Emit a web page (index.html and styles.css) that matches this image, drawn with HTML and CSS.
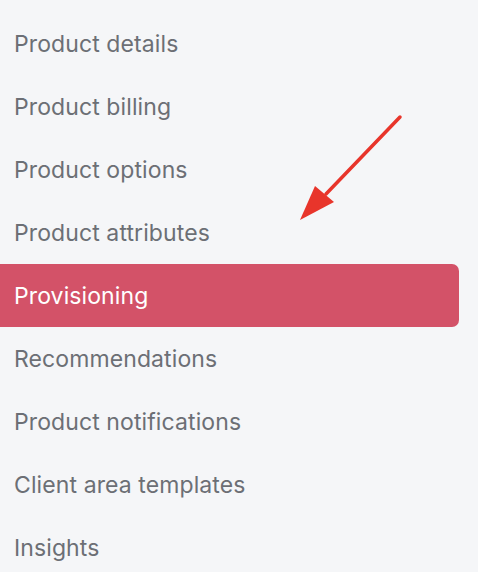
FILE: index.html
```html
<!DOCTYPE html>
<html>
<head>
    <title>Product settings</title>
    <link rel="stylesheet" href="styles.css">
</head>
<body>
    <nav class="side-menu">
        <a class="menu-item" href="#">Product details</a>
        <a class="menu-item" href="#">Product billing</a>
        <a class="menu-item" href="#">Product options</a>
        <a class="menu-item" href="#">Product attributes</a>
        <a class="menu-item active" href="#">Provisioning</a>
        <a class="menu-item" href="#">Recommendations</a>
        <a class="menu-item" href="#">Product notifications</a>
        <a class="menu-item" href="#">Client area templates</a>
        <a class="menu-item" href="#">Insights</a>
    </nav>

    <!-- annotation arrow -->
    <svg class="arrow" width="120" height="120" viewBox="0 0 120 120">
        <line x1="100" y1="17" x2="26" y2="94" stroke="#e8352b" stroke-width="3.5" stroke-linecap="round"/>
        <polygon points="0,120 15,86 34,102" fill="#e8352b"/>
    </svg>
</body>
</html>
```

FILE: styles.css
```css
body { margin: 0; background: #f5f6f8; font-family: Inter, "Noto Sans", sans-serif; }
.side-menu { display: flex; flex-direction: column; width: 459px; padding-top: 12px; }
.menu-item { display: flex; align-items: center; height: 63px; padding-left: 14px; font-size: 23px; letter-spacing: 0.1px; color: #6c6f75; text-decoration: none; }
.menu-item.active { background: #d35268; color: #fff; border-radius: 0 7px 7px 0; }
.arrow { position: absolute; left: 300px; top: 100px; }
```
